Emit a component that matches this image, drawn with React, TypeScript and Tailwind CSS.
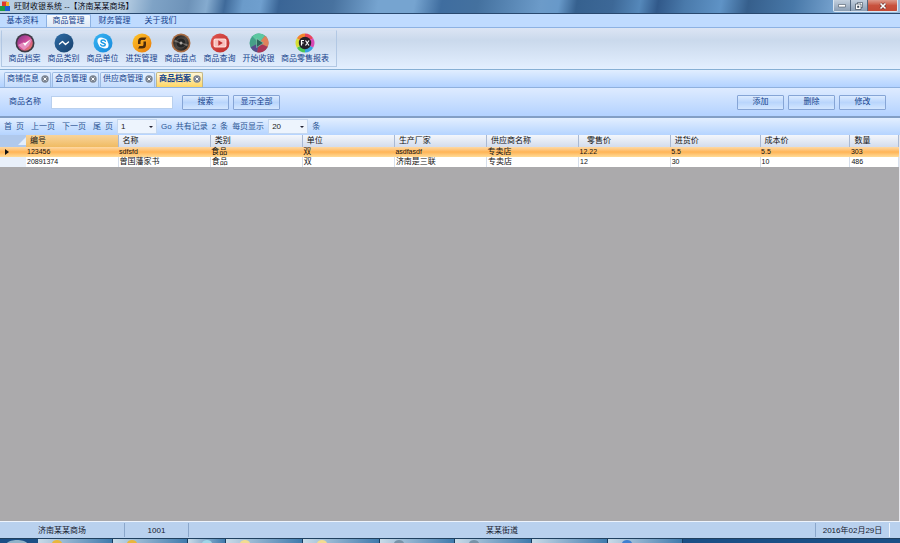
import { useState, type ReactNode } from "react";

const menus = ["基本资料", "商品管理", "财务管理", "关于我们"];

function Disc({ id, stops, ring, children }: { id: string; stops: string[]; ring?: string; children?: ReactNode }) {
  return (
    <svg viewBox="0 0 20 20" className="size-5" aria-hidden="true">
      <defs>
        <linearGradient id={id} x1="0" y1="0" x2="1" y2="1">
          {stops.map((s, i) => (
            <stop key={s + i} offset={i / (stops.length - 1)} stopColor={s} />
          ))}
        </linearGradient>
      </defs>
      <circle cx="10" cy="10" r="9.5" fill={ring ?? `url(#${id})`} />
      {ring && <circle cx="10" cy="10" r="7.8" fill={`url(#${id})`} />}
      {children}
    </svg>
  );
}

const tools: { label: string; icon: ReactNode }[] = [
  {
    label: "商品档案",
    icon: (
      <Disc id="g1" stops={["#7a2f86", "#d14d9b", "#e8845a"]} ring="#3d3a44">
        <path d="M3 12 9 9l2 2 6-5-3 7-5 4z" fill="#e58fc0" />
        <path d="m8 10 2 3 6-7-6 4z" fill="#fff" />
      </Disc>
    ),
  },
  {
    label: "商品类别",
    icon: (
      <Disc id="g2" stops={["#2e6da6", "#173f6b"]}>
        <path d="M5.5 11 8.500 8.500l3 3 3-2.500" fill="none" stroke="#fff" strokeWidth="1.4" strokeLinecap="round" strokeLinejoin="round" />
      </Disc>
    ),
  },
  {
    label: "商品单位",
    icon: (
      <Disc id="g3" stops={["#37b4f2", "#1689dc"]}>
        <circle cx="8" cy="8" r="3.6" fill="#fff" />
        <circle cx="12" cy="12" r="3.6" fill="#fff" />
        <circle cx="10" cy="10" r="4.8" fill="#fff" />
        <path d="M12.3 8.2C11.6 6.6 8 6.7 8 8.5c0 1.8 4.3 1.1 4.3 3.1 0 1.9-3.8 2-4.6.2" fill="none" stroke="#1e9be5" strokeWidth="1.5" strokeLinecap="round" />
      </Disc>
    ),
  },
  {
    label: "进货管理",
    icon: (
      <Disc id="g4" stops={["#ffc62b", "#e87909"]}>
        <path d="M6 11V8.500C6 6 7.500 4.500 10 4.500h4.500L13 7h-2.500C9 7 8.500 7.500 8.500 9v2z" fill="#4a2a0c" />
        <path d="M14 8.500v3.500c0 2.500-1.500 3.500-4 3.500H6L7.500 13H10c1.200 0 1.500-.5 1.500-2V8.500z" fill="#4a2a0c" />
      </Disc>
    ),
  },
  {
    label: "商品盘点",
    icon: (
      <Disc id="g5" stops={["#161616", "#4d4945", "#111111"]} ring="#a76b42">
        <circle cx="10" cy="10" r="5" fill="#242424" stroke="#55514d" strokeWidth=".8" />
        <path d="M10 10 3.500 6.500v2.500zM10 10l6.500 1v2.500z" fill="#77726e" />
        <circle cx="10" cy="10" r="1.500" fill="#aaa5a0" />
      </Disc>
    ),
  },
  {
    label: "商品查询",
    icon: (
      <Disc id="g6" stops={["#e0564f", "#bb2b2b"]}>
        <rect x="3.500" y="5.500" width="13" height="9" rx="2" fill="#ffd9d6" />
        <rect x="4.800" y="6.800" width="10.400" height="6.400" rx="1" fill="#f6bfbc" />
        <path d="m8.300 7.300 4.500 2.700-4.500 2.700z" fill="#c22f30" />
      </Disc>
    ),
  },
  {
    label: "开始收银",
    icon: (
      <Disc id="g7" stops={["#3aa68b", "#4c9c86", "#b84e59"]}>
        <path d="M10 10 3.300 3.300A9.500 9.500 0 0 1 16 2.700z" fill="#5cc7a1" />
        <path d="m10 10 6-7.300a9.500 9.500 0 0 1 2.700 11z" fill="#e0805b" />
        <path d="m10 10 8.500 4a9.500 9.500 0 0 1-10.500 5.300z" fill="#aa3558" />
        <path d="m10 10-2 9.300a9.500 9.500 0 0 1-6.300-5z" fill="#574b8c" />
        <path d="m7.500 5.500 7 4.500-7 4.500z" fill="#2d665c" stroke="#8fd4b8" strokeWidth=".6" />
      </Disc>
    ),
  },
  {
    label: "商品零售报表",
    icon: (
      <svg viewBox="0 0 20 20" className="size-5" aria-hidden="true">
        <g fill="none" strokeWidth="4.500">
          <path d="M10 2.800a7.200 7.200 0 0 1 6.200 3.600" stroke="#e8435c" />
          <path d="M16.200 6.400a7.200 7.200 0 0 1 0 7.200" stroke="#d848b5" />
          <path d="M16.200 13.600A7.200 7.200 0 0 1 10 17.200" stroke="#38a2e0" />
          <path d="M10 17.200a7.200 7.200 0 0 1-6.200-3.600" stroke="#4ac655" />
          <path d="M3.800 13.600a7.200 7.200 0 0 1 0-7.200" stroke="#d7df35" />
          <path d="M3.800 6.400A7.200 7.200 0 0 1 10 2.800" stroke="#f3852f" />
        </g>
        <circle cx="10" cy="10" r="6.200" fill="#25202a" />
        <path d="M9 7.500H6.500v5M6.500 10h2M10.500 7.500l3.500 5M14 7.500l-3.500 5" fill="none" stroke="#fff" strokeWidth="1.200" />
      </svg>
    ),
  },
];

const docs = ["商铺信息", "会员管理", "供应商管理", "商品档案"];
const columns = ["编号", "名称", "类别", "单位", "生产厂家", "供应商名称", "零售价", "进货价", "成本价", "数量"];
const rows = [
  ["123456", "sdfsfd", "食品", "双", "asdfasdf", "专卖店", "12.22", "5.5", "5.5", "303"],
  ["20891374", "曾国藩家书", "食品", "双", "济南是三联", "专卖店", "12", "30", "10", "486"],
];

function ActionButton({ children }: { children: ReactNode }) {
  return (
    <button className="h-[15px] w-[47px] rounded-[1px] border border-[#86a5d6] bg-linear-to-b from-[#dcebff] via-[#b9d5fc] to-[#d3e6ff] leading-3 text-[#15428b]">
      {children}
    </button>
  );
}

function PageSelect({ label, value, options }: { label: string; value: string; options: string[] }) {
  return (
    <span className="relative flex">
      <select aria-label={label} defaultValue={value} className="h-[15px] w-10 appearance-none border border-[#c5d8f0] bg-[#edf4fd] pl-[3px] leading-3 text-[#222]">
        {options.map((o) => (
          <option key={o}>{o}</option>
        ))}
      </select>
      <svg viewBox="0 0 4 2" className="pointer-events-none absolute top-[7px] right-1 h-0.5 w-1" aria-hidden="true">
        <path d="M0 0h4L2 2z" fill="#223" />
      </svg>
    </span>
  );
}

function TitleBar() {
  return (
    <header className="flex h-[14px] items-start border-b border-[#29496f] bg-[linear-gradient(100deg,#b9cfe3_0%,#b4cce2_14%,#7fa3c6_17%,#6d92b8_21%,#85abcf_23%,#3f6a9a_25%,#6b9bca_27%,#6f9fce_29%,#3a6596_31%,#48729f_37%,#76a4d0_42%,#76a4d0_46%,#3f6d9f_49%,#44719f_53%,#6c9bc9_60%,#6899c9_62%,#36618f_64%,#3d6897_68%,#5588ba_71%,#31598a_73%,#4a7aab_76%,#5f93c6_80%,#365f8c_83%,#4878a8_88%,#79a5d1_93%,#9bbbdc_100%)]">
      <svg viewBox="0 0 10 12" className="mr-1 h-3 w-2.5" aria-hidden="true">
        <path d="M2 1.500h5v5H2z" fill="#e0392c" />
        <path d="M0 6h5v5H0z" fill="#1c9b46" />
        <path d="M5 6h5v5H5z" fill="#1d5fd0" />
        <path d="M6 2h3v4H6z" fill="#f1b22a" />
      </svg>
      <h1 className="flex-1 leading-[13px] text-[#0a0a14]">旺财收银系统 --【济南某某商场】</h1>
      <div className="mr-0.5 flex h-3 overflow-hidden rounded-b-[2px] border border-t-0 border-[#dbe7f3]">
        <button aria-label="最小化" className="flex w-[17px] items-center justify-center border-r border-[#53677f] bg-linear-to-b from-[#c3d0de] to-[#8c9fb5]">
          <svg viewBox="0 0 8 4" className="h-1 w-2"><path d="M.500.500h7v2.500h-7z" fill="#fff" stroke="#4b5767" strokeWidth=".6" /></svg>
        </button>
        <button aria-label="还原" className="flex w-[17px] items-center justify-center border-r border-[#53677f] bg-linear-to-b from-[#c3d0de] to-[#8c9fb5]">
          <svg viewBox="0 0 8 8" className="size-2"><path d="M2.500.500h5v5h-5z" fill="#fff" stroke="#384555" strokeWidth=".6" /><path d="M.500 2h5.500v5.500H.500z" fill="#fff" stroke="#384555" strokeWidth=".7" /><path d="M2.200 3.800h2v2h-2z" fill="#384555" /></svg>
        </button>
        <button aria-label="关闭" className="flex w-[29px] items-center justify-center bg-linear-to-b from-[#dc9a8c] via-[#c8523e] to-[#c44a36]">
          <svg viewBox="0 0 8 8" className="size-2"><path d="m1.500 1.500 5 5m0-5-5 5" stroke="#5b2a2a" strokeWidth="2.800" /><path d="m1.500 1.500 5 5m0-5-5 5" stroke="#fff" strokeWidth="1.700" /></svg>
        </button>
      </div>
    </header>
  );
}

function GoodsTable() {
  return (
    <table className="w-full table-fixed border-collapse text-left text-[#111]">
      <colgroup>
        <col className="w-[26px]" />
        <col span={6} className="w-[10.25%]" />
        <col className="w-[10.2%]" />
        <col span={2} className="w-[10%]" />
        <col />
      </colgroup>
      <thead>
        <tr className="h-3 bg-linear-to-b from-[#f4f7fc] to-[#d3dcec]">
          <td className="bg-[#b0c9ec] p-0">
            <svg viewBox="0 0 8 8" className="ml-auto block size-2" aria-hidden="true"><path d="M8 0v8H0z" fill="#e4eefb" /></svg>
          </td>
          {columns.map((c, i) => (
            <th
              key={c}
              scope="col"
              className={
                "border-r border-[#a9b9d3] py-0 font-normal leading-3 whitespace-nowrap " +
                (i === 0 ? "bg-linear-to-b from-[#f8d49a] to-[#f0bb62] pl-1" : i === 6 ? "pl-2" : "pl-1")
              }
            >
              {c}
            </th>
          ))}
        </tr>
      </thead>
      <tbody>
        {rows.map((r, ri) => (
          <tr
            key={r[0]}
            className={
              ri === 0
                ? "h-2.5 bg-linear-to-b from-[#fdd9a4] via-[#ffb455] to-[#fedb96]"
                : "h-2.5 bg-white"
            }
          >
            <td className={ri === 0 ? "p-0" : "bg-[#e9f0fa] p-0"}>
              {ri === 0 && (
                <svg viewBox="0 0 4 6" className="ml-[5px] block h-1.5 w-1" aria-hidden="true"><path d="M0 0l4 3-4 3z" fill="#111" /></svg>
              )}
            </td>
            {r.map((v, i) => (
              <td
                key={i}
                className={
                  "py-0 pl-px leading-2.5 whitespace-nowrap " +
                  (/^[\x20-\x7e]+$/.test(v) ? "text-[7px] " : "") +
                  (ri === 0 ? "" : "border-r border-[#d6dfec]")
                }
              >
                {v}
              </td>
            ))}
          </tr>
        ))}
      </tbody>
    </table>
  );
}

const tasks = [
  { w: "w-[75px]", c: "#e9b63a" },
  { w: "w-[75px]", c: "#e9b63a" },
  { w: "w-[38px]", c: "#9fd6e8" },
  { w: "w-[77px]", c: "#f3dc90" },
  { w: "w-[77px]", c: "#f3dc90" },
  { w: "w-[75px]", c: "#7793a8" },
  { w: "w-[77px]", c: "#7793a8" },
  { w: "w-[76px]", c: "transparent" },
  { w: "w-[75px]", c: "#3f7fd0" },
];

export default function App() {
  const [menu, setMenu] = useState("商品管理");
  const [doc, setDoc] = useState("商品档案");
  return (
    <div className="flex min-h-screen flex-col overflow-hidden bg-[#bfdbff] font-['Liberation_Sans','Noto_Sans_CJK_SC',sans-serif] text-[8px] leading-3">
      <TitleBar />

      <nav className="flex h-[14px] items-end gap-px border-b border-[#8db2e3] bg-[#bfdbff] text-[#15428b]">
        {menus.map((m) => (
          <button
            key={m}
            onClick={() => setMenu(m)}
            className={
              m === menu
                ? "h-[13px] w-[45px] rounded-t-[2px] border border-b-0 border-[#8db2e3] bg-linear-to-b from-[#f5faff] to-[#dfe9f6] leading-3"
                : "h-[13px] w-[45px] leading-3"
            }
          >
            {m}
          </button>
        ))}
      </nav>

      <section className="border-b border-[#86afd4] bg-linear-to-b from-[#dce5f4] via-[#cad9ec] via-30% to-[#e3efff] py-0.5">
        <div className="ml-px flex h-[37px] w-fit border border-[#b2c8e4] border-t-[#d4e1f2] pt-0.5 pr-1 pl-[3px]">
          {tools.map((t) => (
            <button key={t.label} className="flex min-w-[39px] flex-col items-center px-[3px] leading-3 whitespace-nowrap text-[#15428b]">
              {t.icon}
              {t.label}
            </button>
          ))}
        </div>
      </section>

      <div className="flex h-[18px] items-end gap-px border-b border-[#8fb1de] bg-linear-to-b from-[#e1eeff] to-[#b2d2ff] pl-1 text-[#15428b]">
        {docs.map((d) => (
          <div
            key={d}
            className={
              "flex h-[15px] items-center gap-0.5 rounded-t-[2px] border border-b-0 pr-px pb-0.5 pl-0.5 " +
              (d === doc ? "border-[#c5b783] bg-linear-to-b from-[#fff7d5] to-[#ffd55f] font-bold" : "border-[#9dbbe3] bg-linear-to-b from-[#e3efff] to-[#c4dcfc]")
            }
          >
            <button onClick={() => setDoc(d)} className="leading-3 whitespace-nowrap">
              {d}
            </button>
            <button aria-label={"关闭 " + d}>
              <svg viewBox="0 0 8 8" className="block size-2"><circle cx="4" cy="4" r="3.700" fill="#7b8491" /><path d="m2.500 2.500 3 3m0-3-3 3" stroke="#fff" strokeWidth="1" /></svg>
            </button>
          </div>
        ))}
      </div>

      <form onSubmit={(e) => e.preventDefault()} className="flex h-[30px] items-center border-b-2 border-[#839fc5] bg-linear-to-b from-[#deebff] to-[#b3d2ff] pr-3.5 pl-[9px] text-[#15428b]">
        <label htmlFor="goods-name" className="mr-2.5 whitespace-nowrap">商品名称</label>
        <input id="goods-name" className="h-[13px] w-[122px] border border-[#b9d0ee] bg-white px-1 outline-none" />
        <div className="ml-[9px] flex flex-1 gap-1">
          <ActionButton>搜索</ActionButton>
          <ActionButton>显示全部</ActionButton>
        </div>
        <div className="flex gap-1">
          <ActionButton>添加</ActionButton>
          <ActionButton>删除</ActionButton>
          <ActionButton>修改</ActionButton>
        </div>
      </form>

      <div className="flex h-[17px] items-center gap-1 bg-linear-to-b from-[#e3efff] to-[#b5d4ff] pl-1 whitespace-nowrap text-[#2c5694]">
        <div className="flex gap-[7px]">
          <button>首&ensp;页</button>
          <button>上一页</button>
          <button>下一页</button>
          <button>尾&ensp;页</button>
        </div>
        <PageSelect label="页码" value="1" options={["1"]} />
        <button>Go</button>
        <span>共有记录&ensp;2&ensp;条</span>
        <span>每页显示</span>
        <PageSelect label="每页显示" value="20" options={["10", "20", "50"]} />
        <span>条</span>
      </div>

      <main className="flex-1 border-r border-[#e8e8ee] bg-[#abaaac]">
        <GoodsTable />
      </main>

      <footer className="flex h-[17px] border-t border-[#eef4fc] bg-[#b9d1ee] py-px pr-2.5 text-center leading-[15px] text-[#16202e]">
        <span className="w-[125px] border-r border-[#8ba7cb]">济南某某商场</span>
        <span className="w-16 border-r border-[#8ba7cb]">1001</span>
        <span className="flex-1">某某街道</span>
        <span className="w-[75px] border-x border-[#8ba7cb] border-r-[#eef4fc] whitespace-nowrap">2016年02月29日</span>
      </footer>

      <div className="flex h-[5px] overflow-hidden border-t border-[#20405f] bg-[#1b4f86]" aria-hidden="true">
        <svg viewBox="0 0 38 4" className="h-1 w-[38px] shrink-0"><path d="M7 4C10 0 24 0 27 4z" fill="#8fb3c9" /></svg>
        {tasks.map((t, i) => (
          <div key={i} className={t.w + " shrink-0 border-r border-[#173c60] bg-linear-to-r from-[#c9dbe8] to-[#3e7aac] pl-3.5"}>
            <svg viewBox="0 0 10 4" className="block h-1 w-2.5"><path d="M0 4C1 0 9 0 10 4z" fill={t.c} /></svg>
          </div>
        ))}
      </div>
    </div>
  );
}
